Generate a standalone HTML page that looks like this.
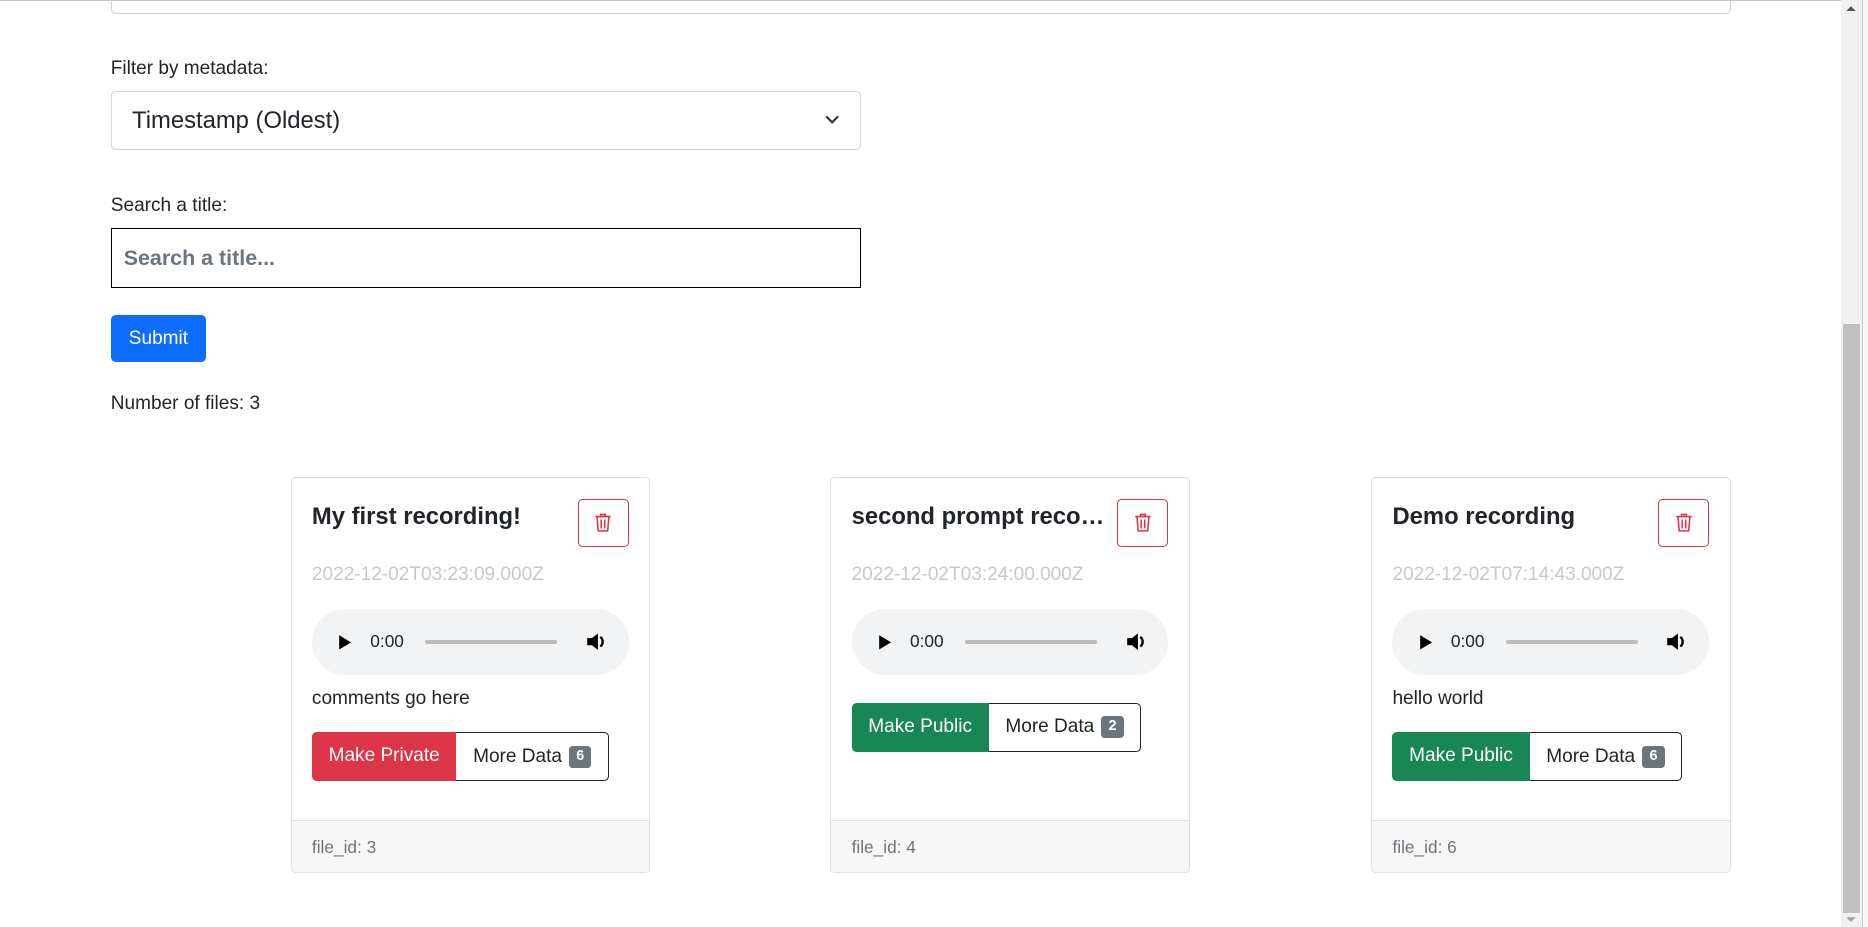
<!DOCTYPE html>
<html><head><meta charset="utf-8"><style>
html,body{margin:0;padding:0;overflow:hidden;background:#fff}
#root{zoom:1.19133;width:1568px;height:778px;position:relative;font-family:"Liberation Sans",sans-serif;color:#212529}
.abs{position:absolute}
.lbl{font-size:16px}
.card{position:absolute;top:400px;width:300px;height:331px;border:1px solid #dfdfdf;border-radius:4px;overflow:hidden}
.card .t{position:absolute;left:17px;top:21px;font-size:20px;font-weight:bold;color:#212529;white-space:nowrap;width:215px;overflow:hidden;text-overflow:ellipsis}
.card .tr{position:absolute;left:240px;top:18px;width:43px;height:40px;border:1px solid #dc3545;border-radius:4px;box-sizing:border-box}
.au{position:absolute;left:17px;top:110px;width:266px;height:56px;background:#f1f3f4;border-radius:28px}
.cm{position:absolute;left:17px;top:177px;font-size:16px}
.btns{position:absolute;left:17px;display:flex;height:41px;font-size:16px}
.b1{color:#fff;padding:0 14px;line-height:41px;border-radius:4px 0 0 4px}
.b2{border:1px solid #212529;border-left:none;border-radius:0 4px 4px 0;padding:0 14px;line-height:39px;box-sizing:border-box;display:flex;align-items:center}
.badge{background:#6c757d;color:#fff;font-size:12px;font-weight:bold;border-radius:3px;padding:2px 6px;margin-left:6px;line-height:15px}
.ft{position:absolute;left:0;right:0;bottom:0;height:43px;background:#f7f7f7;border-top:1px solid #dfdfdf;font-size:14.5px;color:#6c757d;padding-left:17px;line-height:45px}
</style></head><body><div id="root">
<div class="abs" style="left:93px;top:-10px;width:1358px;height:20px;border:1px solid #ced4da;border-radius:4px"></div>
<div class="abs" style="left:0;top:0;width:1545px;height:1px;background:#c8c8c8"></div>
<div class="abs lbl" style="left:93px;top:49px">Filter by metadata:</div>
<div class="abs" style="left:93px;top:76px;width:628px;height:48px;border:1px solid #ced4da;border-radius:4px">
 <div class="abs" style="left:17px;top:13px;font-size:20px">Timestamp (Oldest)</div>
 <svg class="abs" style="left:599px;top:19px" width="12" height="10" viewBox="0 0 12 10"><path d="M1 2l5 5 5-5" fill="none" stroke="#333" stroke-width="1.8"/></svg>
</div>
<div class="abs lbl" style="left:93px;top:164px">Search a title:</div>
<div class="abs" style="left:93px;top:191px;width:628px;height:49px;border:1px solid #000">
 <div class="abs" style="left:10px;top:15px;font-size:18px;color:#6c757d;font-weight:bold">Search a title...</div>
</div>
<div class="abs" style="left:93px;top:264px;width:80px;height:40px;background:#0d6efd;border-radius:4px;color:#fff;font-size:16px;line-height:41px;text-align:center">Submit</div>
<div class="abs lbl" style="left:93px;top:330px">Number of files: 3</div>

<div class="card" style="left:244px">
 <div class="t">My first recording!</div>
 <div class="tr"><svg style="position:absolute;left:13px;top:11px" width="15" height="16" viewBox="0 0 15 16"><path d="M1 3h13M5.5 3V1.2h4V3M2.5 3l1 12h8l1-12M6 5.5v7.5M9 5.5v7.5" fill="none" stroke="#dc3545" stroke-width="1.3"/></svg></div>
 <div class="abs" style="left:17px;top:73px;font-size:16px;color:#c8c8c8">2022-12-02T03:23:09.000Z</div>
 <div class="au"><svg class="abs" style="left:22px;top:21px" width="12" height="14"><path d="M1 1l10 6-10 6z" fill="#000"/></svg><div class="abs" style="left:49px;top:19px;font-size:14.5px">0:00</div><div class="abs" style="left:95px;top:26px;width:111px;height:4px;background:#bbb;border-radius:2px"></div><svg class="abs" style="left:230px;top:19px" width="18" height="18" viewBox="0 0 18 18"><path d="M1 6h4l5-4v14l-5-4H1z" fill="#000"/><path d="M12 5a5 5 0 0 1 0 8" fill="none" stroke="#000" stroke-width="2"/></svg></div>
 <div class="cm">comments go here</div>
 <div class="btns" style="top:214px"><div class="b1" style="background:#dc3545">Make Private</div><div class="b2">More Data<span class="badge">6</span></div></div>
 <div class="ft">file_id: 3</div>
</div>
<div class="card" style="left:697px">
 <div class="t">second prompt recording</div>
 <div class="tr"><svg style="position:absolute;left:13px;top:11px" width="15" height="16" viewBox="0 0 15 16"><path d="M1 3h13M5.5 3V1.2h4V3M2.5 3l1 12h8l1-12M6 5.5v7.5M9 5.5v7.5" fill="none" stroke="#dc3545" stroke-width="1.3"/></svg></div>
 <div class="abs" style="left:17px;top:73px;font-size:16px;color:#c8c8c8">2022-12-02T03:24:00.000Z</div>
 <div class="au"><svg class="abs" style="left:22px;top:21px" width="12" height="14"><path d="M1 1l10 6-10 6z" fill="#000"/></svg><div class="abs" style="left:49px;top:19px;font-size:14.5px">0:00</div><div class="abs" style="left:95px;top:26px;width:111px;height:4px;background:#bbb;border-radius:2px"></div><svg class="abs" style="left:230px;top:19px" width="18" height="18" viewBox="0 0 18 18"><path d="M1 6h4l5-4v14l-5-4H1z" fill="#000"/><path d="M12 5a5 5 0 0 1 0 8" fill="none" stroke="#000" stroke-width="2"/></svg></div>
 <div class="btns" style="top:189px"><div class="b1" style="background:#198754">Make Public</div><div class="b2">More Data<span class="badge">2</span></div></div>
 <div class="ft">file_id: 4</div>
</div>
<div class="card" style="left:1151px">
 <div class="t">Demo recording</div>
 <div class="tr"><svg style="position:absolute;left:13px;top:11px" width="15" height="16" viewBox="0 0 15 16"><path d="M1 3h13M5.5 3V1.2h4V3M2.5 3l1 12h8l1-12M6 5.5v7.5M9 5.5v7.5" fill="none" stroke="#dc3545" stroke-width="1.3"/></svg></div>
 <div class="abs" style="left:17px;top:73px;font-size:16px;color:#c8c8c8">2022-12-02T07:14:43.000Z</div>
 <div class="au"><svg class="abs" style="left:22px;top:21px" width="12" height="14"><path d="M1 1l10 6-10 6z" fill="#000"/></svg><div class="abs" style="left:49px;top:19px;font-size:14.5px">0:00</div><div class="abs" style="left:95px;top:26px;width:111px;height:4px;background:#bbb;border-radius:2px"></div><svg class="abs" style="left:230px;top:19px" width="18" height="18" viewBox="0 0 18 18"><path d="M1 6h4l5-4v14l-5-4H1z" fill="#000"/><path d="M12 5a5 5 0 0 1 0 8" fill="none" stroke="#000" stroke-width="2"/></svg></div>
 <div class="cm">hello world</div>
 <div class="btns" style="top:214px"><div class="b1" style="background:#198754">Make Public</div><div class="b2">More Data<span class="badge">6</span></div></div>
 <div class="ft">file_id: 6</div>
</div>

<div class="abs" style="left:1545px;top:0;width:18px;height:778px;background:#f1f1f1"></div>
<div class="abs" style="left:1563px;top:0;width:5px;height:778px;background:#f7f7f7;border-left:1px solid #ccc"></div>
<div class="abs" style="left:1547px;top:272px;width:14px;height:494px;background:#c1c1c1"></div>
<svg class="abs" style="left:1549px;top:4px" width="10" height="6"><path d="M1 5l4-4 4 4z" fill="#505050"/></svg>
<svg class="abs" style="left:1549px;top:769px" width="10" height="6"><path d="M1 1l4 4 4-4z" fill="#a0a0a0"/></svg>
</div></body></html>
